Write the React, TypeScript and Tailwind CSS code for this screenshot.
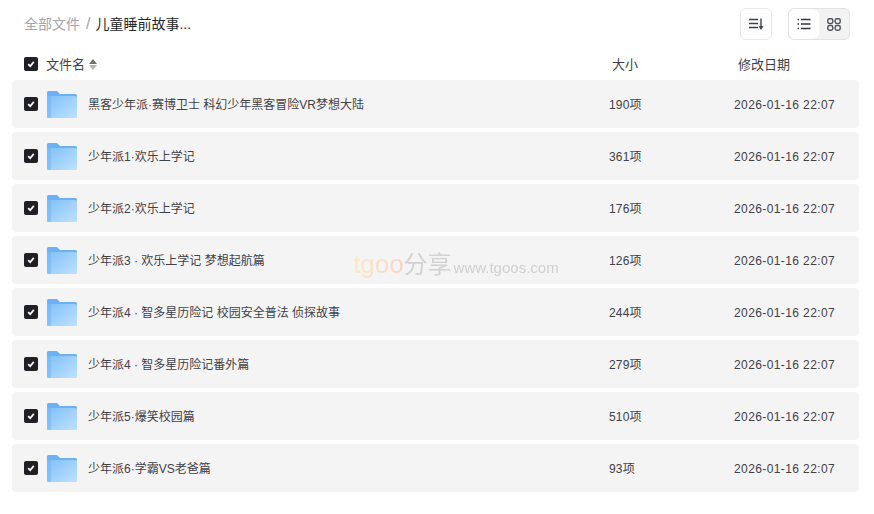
const files = [
  { name: "黑客少年派·赛博卫士 科幻少年黑客冒险VR梦想大陆", size: "190项" },
  { name: "少年派1·欢乐上学记", size: "361项" },
  { name: "少年派2·欢乐上学记", size: "176项" },
  { name: "少年派3 · 欢乐上学记 梦想起航篇", size: "126项" },
  { name: "少年派4 · 智多星历险记 校园安全普法 侦探故事", size: "244项" },
  { name: "少年派4 · 智多星历险记番外篇", size: "279项" },
  { name: "少年派5·爆笑校园篇", size: "510项" },
  { name: "少年派6·学霸VS老爸篇", size: "93项" },
];

function Check() {
  return (
    <div className="w-[14px] h-[14px] rounded-[2px] bg-[#1f2026] flex items-center justify-center shrink-0">
      <svg width="8" height="8" viewBox="0 0 10 10" fill="none">
        <path d="M1.5 5.2 4 7.8 8.5 2.4" stroke="#fff" strokeWidth="2.2" />
      </svg>
    </div>
  );
}

function Folder() {
  return (
    <svg width="30" height="27" viewBox="0 0 30 27" className="shrink-0 block mt-[1px]">
      <defs>
        <linearGradient id="fold" x1="0" y1="0" x2="1" y2="1">
          <stop offset="0" stopColor="#7fc0f9" />
          <stop offset="1" stopColor="#bfe1fe" />
        </linearGradient>
      </defs>
      <path d="M0 1.5A1.5 1.5 0 0 1 1.5 0H10l3 3H28.5A1.5 1.5 0 0 1 30 4.5V10H0Z" fill="#6ab2f5" />
      <path d="M0 5H28.5A1.5 1.5 0 0 1 30 6.5V25.5A1.5 1.5 0 0 1 28.5 27H1.5A1.5 1.5 0 0 1 0 25.5Z" fill="url(#fold)" />
      <path d="M0 5V26A1 1 0 0 0 1 27H4V5Z" fill="#6ab2f5" opacity="0.45" />
      <path d="M25 8.5H28V10.5H25Z" fill="#a8d4fa" />
    </svg>
  );
}

function SortIcon() {
  return (
    <svg width="16" height="14" viewBox="0 0 16 14" fill="none" stroke="#3f4148" strokeWidth="1.4">
      <path d="M1 2.5H10M1 6.5H10M1 10.5H10" />
      <path d="M13 1.5V11.5" />
      <path d="M11 9.5 13 12.5 15 9.5Z" fill="#3f4148" strokeWidth="0.6" />
    </svg>
  );
}

function ListIcon() {
  return (
    <svg width="14" height="12" viewBox="0 0 14 12" fill="none" stroke="#33353b" strokeWidth="1.3">
      <path d="M0.5 1.5H2M0.5 6H2M0.5 10.5H2" />
      <path d="M4 1.5H13.5M4 6H13.5M4 10.5H13.5" />
    </svg>
  );
}

function GridIcon() {
  return (
    <svg width="14" height="13" viewBox="0 0 14 13" fill="none" stroke="#55575d" strokeWidth="1.5">
      <rect x="0.8" y="0.8" width="5" height="4.6" rx="1.6" />
      <rect x="8.2" y="0.8" width="5" height="4.6" rx="1.6" />
      <rect x="0.8" y="7.6" width="5" height="4.6" rx="1.6" />
      <rect x="8.2" y="7.6" width="5" height="4.6" rx="1.6" />
    </svg>
  );
}

export default function App() {
  return (
    <div
      className="relative w-[874px] h-[514px] bg-white overflow-hidden text-[12px] text-[#3f4148]"
      style={{ fontFamily: '"Liberation Sans", "Noto Sans CJK SC", sans-serif' }}
    >
      <div className="flex items-center justify-between h-[48px] pl-[24px] pr-[24px]">
        <div className="flex items-center text-[14px]">
          <span className="text-[#a3a5ab]">全部文件</span>
          <span className="text-[#a3a5ab] ml-[6px] mr-[5px] text-[16px] font-light">/</span>
          <span className="text-[#25262b]">儿童睡前故事...</span>
        </div>
        <div className="flex items-center gap-[16px]">
          <div className="w-[32px] h-[32px] rounded-[6px] border border-[#e8e8e8] flex items-center justify-center">
            <SortIcon />
          </div>
          <div className="flex w-[62px] h-[32px] rounded-[6px] border border-[#e3e3e3] bg-[#f3f3f3] overflow-hidden">
            <div className="w-[30px] bg-white rounded-[6px] flex items-center justify-center">
              <ListIcon />
            </div>
            <div className="flex-1 flex items-center justify-center">
              <GridIcon />
            </div>
          </div>
        </div>
      </div>

      <div className="flex items-center h-[32px] pl-[24px] text-[13px]">
        <Check />
        <span className="ml-[8px] mt-[1px]">文件名</span>
        <span className="ml-[4px] mt-[1px] flex flex-col gap-[1px]">
          <span className="w-0 h-0 border-x-[4px] border-x-transparent border-b-[5px] border-b-[#6f6f6f]" />
          <span className="w-0 h-0 border-x-[4px] border-x-transparent border-t-[5px] border-t-[#b4b4b4]" />
        </span>
        <span className="absolute left-[612px] mt-[1px]">大小</span>
        <span className="absolute left-[738px] mt-[1px]">修改日期</span>
      </div>

      <div className="flex flex-col gap-[4px] pl-[12px] pr-[15px]">
        {files.map((f) => (
          <div key={f.name} className="flex items-center h-[48px] rounded-[4px] bg-[#f4f4f4] pl-[12px]">
            <Check />
            <div className="ml-[9px]">
              <Folder />
            </div>
            <span className="ml-[10px] w-[522px] pl-[1px] pt-[2px]">{f.name}</span>
            <span className="w-[125px] pt-[2px] tracking-[0.2px]">{f.size}</span>
            <span className="pt-[2px] tracking-[0.4px]">2026-01-16 22:07</span>
          </div>
        ))}
      </div>

      <div className="absolute left-[353px] top-[249px] flex items-baseline opacity-70 pointer-events-none">
        <span className="text-[26px] leading-[30px] bg-gradient-to-r from-[#fde8b0] to-[#fbc4b4] bg-clip-text text-transparent">tgoo</span>
        <span className="text-[24px] text-[#c4c4c4] leading-[30px]">分享</span>
        <span className="ml-[2px] text-[15px] text-[#c0c0c0]">www.tgoos.com</span>
      </div>
    </div>
  );
}
